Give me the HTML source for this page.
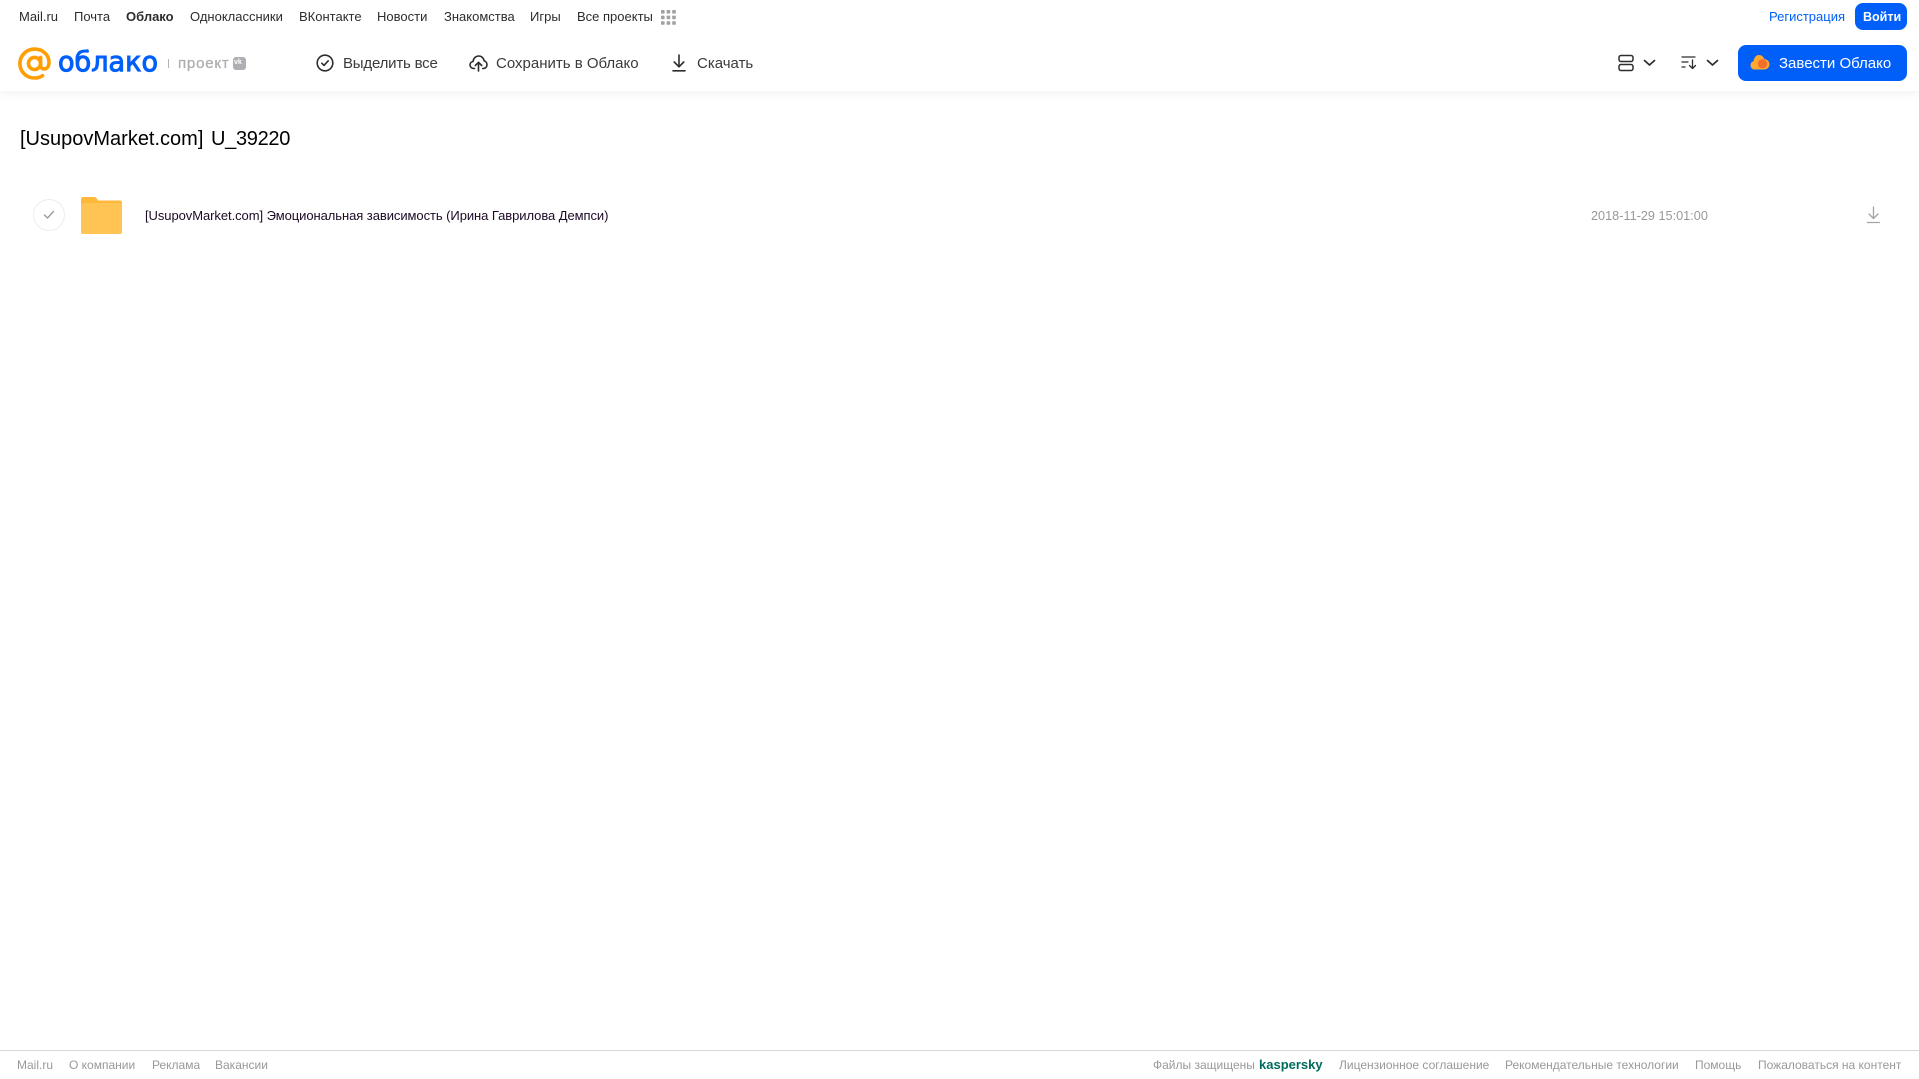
<!DOCTYPE html>
<html lang="ru">
<head>
<meta charset="utf-8">
<title>Облако</title>
<style>
html,body{margin:0;padding:0;background:#fff}
body{width:1919px;height:1079px;position:relative;overflow:hidden;font-family:"Liberation Sans",sans-serif;color:#2c2d2e}
.t{position:absolute;white-space:nowrap;line-height:18px}
.n{font-size:13px;top:8px;color:#2c2d2e}
.a{font-size:15px;top:54.5px;color:#3a3b3d}
.f{font-size:12px;top:1056px;color:#999}
svg{position:absolute;display:block}
#hdr{position:absolute;left:0;top:0;width:1919px;height:91px;background:#fff;box-shadow:0 2px 10px rgba(0,0,0,.06)}
.btn{position:absolute;background:#005ff9;border-radius:8px}
</style>
</head>
<body>
<div id="hdr"></div>

<span class="t n" style="left:19px">Mail.ru</span>
<span class="t n" style="left:74px">Почта</span>
<span class="t n" style="left:126px;font-weight:bold">Облако</span>
<span class="t n" style="left:190px">Одноклассники</span>
<span class="t n" style="left:299px">ВКонтакте</span>
<span class="t n" style="left:377px">Новости</span>
<span class="t n" style="left:444px">Знакомства</span>
<span class="t n" style="left:530px">Игры</span>
<span class="t n" style="left:577px">Все проекты</span>
<svg style="left:661px;top:10px" width="15" height="15" viewBox="0 0 15 15" fill="#a0a1a4">
<rect x="0" y="0" width="3.6" height="3.6" rx=".7"/><rect x="5.6" y="0" width="3.6" height="3.6" rx=".7"/><rect x="11.2" y="0" width="3.6" height="3.6" rx=".7"/>
<rect x="0" y="5.6" width="3.6" height="3.6" rx=".7"/><rect x="5.6" y="5.6" width="3.6" height="3.6" rx=".7"/><rect x="11.2" y="5.6" width="3.6" height="3.6" rx=".7"/>
<rect x="0" y="11.2" width="3.6" height="3.6" rx=".7"/><rect x="5.6" y="11.2" width="3.6" height="3.6" rx=".7"/><rect x="11.2" y="11.2" width="3.6" height="3.6" rx=".7"/>
</svg>

<span class="t n" style="left:1769px;color:#005ff9">Регистрация</span>
<div class="btn" style="left:1855px;top:3px;width:52px;height:27px"></div>
<span class="t n" style="left:1863px;color:#fff;font-weight:bold;font-size:12.5px">Войти</span>

<!-- logo -->
<svg style="left:18px;top:47px" width="33" height="33" viewBox="0 0 35 35" fill="none">
<circle cx="17.5" cy="17.5" r="6.4" stroke="#ff9e00" stroke-width="3.8"/>
<path d="M24 11v8.500c0 5.200 7.600 5 8.600-.6 1.700-9.200-5.400-16.700-15-16.700C8.900 2.200 2 9.100 2 17.600s6.900 15.300 15.600 15.300c3.400 0 6.200-.9 8.400-2.500" stroke="#ff9e00" stroke-width="3.800" stroke-linecap="round"/>
</svg>
<svg style="left:56px;top:42px;overflow:visible" width="106" height="40"><text x="2" y="29" font-family="DejaVu Sans" font-size="28" fill="#005ff9" stroke="#005ff9" stroke-width="1" textLength="100" lengthAdjust="spacingAndGlyphs">облако</text></svg>
<div style="position:absolute;left:168px;top:59px;width:1px;height:9px;background:#b4b5b8"></div>
<span class="t" style="left:178px;top:54.500px;font-size:15px;color:#adaeb1;letter-spacing:.8px;-webkit-text-stroke:.3px #adaeb1">проект</span>
<div style="position:absolute;left:233px;top:57px;width:13px;height:13px;border-radius:3px;background:#aeafb2"></div>
<span class="t" style="left:234px;top:54px;font-size:7px;font-weight:bold;color:#fff">vk</span>

<!-- actions -->
<svg style="left:316px;top:54px" width="18" height="18" viewBox="0 0 18 18" fill="none" stroke="#2c2d2e" stroke-width="1.6" stroke-linecap="round" stroke-linejoin="round">
<circle cx="9" cy="9" r="7.8"/><path d="M5.800 9.200l2.200 2.200 4.200-4.600"/>
</svg>
<span class="t a" style="left:343px;letter-spacing:-.2px">Выделить все</span>
<svg style="left:469px;top:54px" width="19" height="18" viewBox="0 0 19 18" fill="none" stroke="#2c2d2e" stroke-width="1.6" stroke-linecap="round" stroke-linejoin="round">
<path d="M5.500 14.500H4.800C2.600 14.500 1 12.900 1 11c0-1.800 1.300-3.200 3-3.500C4.400 4.400 6.700 2 9.700 2c2.800 0 5 2 5.400 4.800 1.700.4 2.900 2 2.900 3.900 0 2.100-1.600 3.800-3.700 3.800h-.6"/>
<path d="M9.500 17V8.500M6.300 11.500l3.200-3.200 3.200 3.200"/>
</svg>
<span class="t a" style="left:496px">Сохранить в Облако</span>
<svg style="left:671px;top:54px" width="16" height="18" viewBox="0 0 16 18" fill="none" stroke="#2c2d2e" stroke-width="1.6" stroke-linecap="round" stroke-linejoin="round">
<path d="M8 1v11.500M3.200 8l4.800 4.800L12.800 8M2 16.800h12"/>
</svg>
<span class="t a" style="left:697px">Скачать</span>

<!-- right controls -->
<svg style="left:1618px;top:54px" width="16" height="18" viewBox="0 0 16 18" fill="none" stroke="#2c2d2e" stroke-width="1.5">
<rect x="1" y="1.500" width="14" height="6" rx="2"/><rect x="1" y="10.500" width="14" height="6" rx="2"/>
</svg>
<svg style="left:1643px;top:59px" width="13" height="8" viewBox="0 0 13 8" fill="none" stroke="#2c2d2e" stroke-width="1.700" stroke-linecap="round" stroke-linejoin="round"><path d="M1.500 1.500l5 4.500 5-4.500"/></svg>
<svg style="left:1681px;top:55px" width="17" height="15" viewBox="0 0 17 15" fill="none" stroke="#2c2d2e" stroke-width="1.300" stroke-linecap="round" stroke-linejoin="round">
<path d="M1 2h13M1 7h6M1 12h3M11.500 5v8.500M8.500 10.500l3 3 3-3"/>
</svg>
<svg style="left:1706px;top:59px" width="13" height="8" viewBox="0 0 13 8" fill="none" stroke="#2c2d2e" stroke-width="1.700" stroke-linecap="round" stroke-linejoin="round"><path d="M1.500 1.500l5 4.500 5-4.500"/></svg>

<div class="btn" style="left:1738px;top:45px;width:169px;height:36px"></div>
<svg style="left:1750px;top:54px" width="20" height="17" viewBox="0 0 20 17">
<path d="M5 15.500C2.300 15.500.5 13.600.5 11.200c0-2 1.300-3.600 3-4C4.100 3.400 6.200 1 9 1c2.500 0 4.500 1.700 5.200 4 2.900.2 5.300 2.400 5.300 5.300 0 2.900-2.300 5.200-5.200 5.200z" fill="#ffa930"/>
<circle cx="12.500" cy="9.800" r="4.700" fill="#f4702a"/>
</svg>
<span class="t a" style="left:1779px;color:#fff">Завести Облако</span>

<!-- title -->
<span class="t" style="left:20px;top:127px;font-size:20px;line-height:24px;color:#000">[UsupovMarket.com]</span>
<span class="t" style="left:211px;top:127px;font-size:20px;line-height:24px;color:#000;letter-spacing:-.3px">U_39220</span>

<!-- row -->
<div style="position:absolute;left:33px;top:199px;width:30px;height:30px;border:1px solid #eceded;border-radius:50%"></div>
<svg style="left:43px;top:210px" width="12" height="10" viewBox="0 0 12 10" fill="none" stroke="#999" stroke-width="1.300" stroke-linecap="round" stroke-linejoin="round"><path d="M1.500 5l3 3 6-6.500"/></svg>
<svg style="left:81px;top:197px" width="41" height="37" viewBox="0 0 41 37">
<path d="M2 0h11c1.400 0 2.200.6 3 1.700L17 3.500h22c1.100 0 2 .9 2 2V35c0 1.100-.9 2-2 2H2c-1.100 0-2-.9-2-2V2C0 .9.900 0 2 0z" fill="#ffb93a"/>
<path d="M0 7.500C0 6.900.9 6 2 6h37c1.100 0 2 .9 2 1.500V35c0 1.100-.9 2-2 2H2c-1.100 0-2-.9-2-2z" fill="#ffc454"/>
</svg>
<span class="t" style="left:145px;top:207px;font-size:13px;color:#1d0a26;letter-spacing:-.065px">[UsupovMarket.com] Эмоциональная зависимость (Ирина Гаврилова Демпси)</span>
<span class="t" style="left:1591px;top:207px;font-size:12.700px;color:#999">2018-11-29 15:01:00</span>
<svg style="left:1865.500px;top:206px" width="15" height="18" viewBox="0 0 15 18" fill="none" stroke="#a3a3a3" stroke-width="1.300" stroke-linecap="round" stroke-linejoin="round">
<path d="M7.500 1v11M3 8l4.500 4.500L12 8M1.500 16.500h12"/>
</svg>

<!-- footer -->
<div style="position:absolute;left:0;top:1050px;width:1919px;height:1px;background:#d8d8d8"></div>
<span class="t f" style="left:17px">Mail.ru</span>
<span class="t f" style="left:69px">О компании</span>
<span class="t f" style="left:152px">Реклама</span>
<span class="t f" style="left:215px">Вакансии</span>
<span class="t f" style="left:1153px">Файлы защищены</span>
<span class="t f" style="left:1259px;font-size:13px;font-weight:bold;color:#006d5c">kaspersky</span>
<span class="t f" style="left:1339px">Лицензионное соглашение</span>
<span class="t f" style="left:1505px">Рекомендательные технологии</span>
<span class="t f" style="left:1695px">Помощь</span>
<span class="t f" style="left:1758px">Пожаловаться на контент</span>
</body>
</html>
